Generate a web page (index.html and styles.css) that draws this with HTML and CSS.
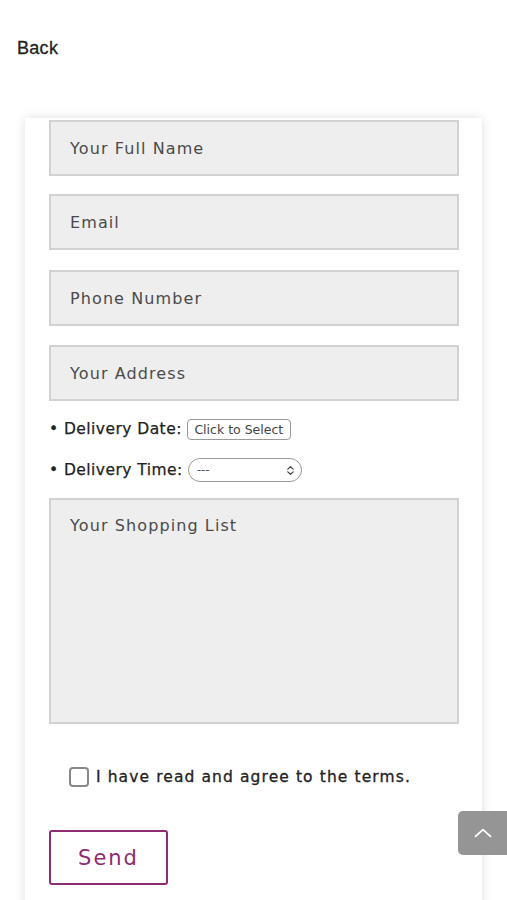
FILE: index.html
```html
<!DOCTYPE html>
<html>
<head>
<meta charset="utf-8">
<link rel="stylesheet" href="styles.css">
</head>
<body>
<header class="top">
  <a class="back">Back</a>
</header>
<main class="card">
  <form class="form">
    <input class="field field-name" type="text" placeholder="Your Full Name">
    <input class="field field-email" type="text" placeholder="Email">
    <input class="field" type="text" placeholder="Phone Number">
    <input class="field" type="text" placeholder="Your Address">
    <div class="line line-date">
      <span class="label">• Delivery Date:</span>
      <span class="date">Click to Select</span>
    </div>
    <div class="line line-time">
      <span class="label">• Delivery Time:</span>
      <span class="select"><span>---</span>
        <svg class="updown" viewBox="0 0 10 12" width="9" height="11"><path d="M2 4.5 L5 1.8 L8 4.5 M2 7.5 L5 10.2 L8 7.5" fill="none" stroke="#444" stroke-width="1.4" stroke-linecap="round" stroke-linejoin="round"/></svg>
      </span>
    </div>
    <textarea class="list" placeholder="Your Shopping List"></textarea>
    <label class="terms"><span class="box"></span><span>I have read and agree to the terms.</span></label>
    <button class="send" type="button">Send</button>
  </form>
</main>
<div class="totop">
  <svg viewBox="0 0 24 14" width="20" height="12"><path d="M3 11 L12 3 L21 11" fill="none" stroke="#fff" stroke-width="2.2" stroke-linecap="round" stroke-linejoin="round"/></svg>
</div>
</body>
</html>
```
FILE: styles.css
```css
html, body {
  margin: 0;
  padding: 0;
  background: #fff;
}
body {
  font-family: "DejaVu Sans", sans-serif;
  color: #333;
  height: 900px;
  overflow: hidden;
}
.top {
  height: 118px;
  box-sizing: border-box;
  padding: 38px 0 0 17px;
}
.back {
  font-family: "Liberation Sans", Arial, sans-serif;
  font-size: 18px;
  font-weight: 500;
  color: #222;
  letter-spacing: 0.3px;
  -webkit-text-stroke: 0.3px #222;
}
.card {
  margin: 0 25px;
  background: #fff;
  box-shadow: 0 0 10px rgba(0,0,0,0.13);
  padding: 2px 23px 40px 24px;
  min-height: 800px;
}
.form {
  display: flex;
  flex-direction: column;
  align-items: flex-start;
}
.field, .list {
  box-sizing: border-box;
  width: 410px;
  height: 56px;
  margin: 0 0 19px 0;
  background: #eee;
  border: 2px solid #d2d2d2;
  border-radius: 0;
  padding: 0 19px;
  font-family: "DejaVu Sans", sans-serif;
  font-size: 16px;
  letter-spacing: 1.1px;
  color: #444;
  outline: none;
}
.field-name {
  margin-bottom: 18px;
}
.field-email {
  margin-bottom: 20px;
}
.field::placeholder, .list::placeholder {
  color: #4a4a4a;
  opacity: 1;
}
.line {
  display: flex;
  align-items: center;
  height: 24px;
}
.line-date {
  margin-top: -3px;
}
.line-time {
  margin-top: 17px;
}
.label {
  font-size: 15.5px;
  font-weight: 500;
  color: #222;
  letter-spacing: 0.45px;
  margin-right: 5px;
  -webkit-text-stroke: 0.25px #222;
}
.date {
  box-sizing: border-box;
  height: 21px;
  width: 104px;
  border: 1px solid #999;
  border-radius: 4px;
  font-size: 12.5px;
  color: #444;
  display: flex;
  align-items: center;
  justify-content: center;
  white-space: nowrap;
  overflow: hidden;
}
.select {
  box-sizing: border-box;
  height: 24px;
  width: 114px;
  border: 1px solid #999;
  border-radius: 12px;
  display: flex;
  align-items: center;
  justify-content: space-between;
  padding: 0 6px 0 8px;
  font-size: 12px;
  color: #555;
}
.list {
  height: 226px;
  margin-top: 16px;
  padding: 16px 19px;
  resize: none;
  margin-bottom: 0;
  line-height: 20px;
}
.terms {
  display: flex;
  align-items: center;
  margin: 43px 0 0 20px;
  font-size: 15.5px;
  font-weight: 500;
  color: #222;
  letter-spacing: 1.1px;
  -webkit-text-stroke: 0.3px #222;
}
.box {
  width: 16px;
  height: 16px;
  border: 2px solid #888;
  border-radius: 4px;
  margin-right: 7px;
  background: #fff;
}
.send {
  margin-top: 43px;
  box-sizing: border-box;
  width: 119px;
  height: 55px;
  background: #fff;
  border: 2px solid #8e2c72;
  border-radius: 3px;
  color: #8e2c72;
  font-family: "DejaVu Sans", sans-serif;
  font-size: 21px;
  letter-spacing: 2px;
  cursor: pointer;
}
.totop {
  position: fixed;
  left: 458px;
  top: 811px;
  width: 60px;
  height: 44px;
  background: #959595;
  border-radius: 5px;
  display: flex;
  align-items: center;
  padding-left: 15px;
  box-sizing: border-box;
}
```
